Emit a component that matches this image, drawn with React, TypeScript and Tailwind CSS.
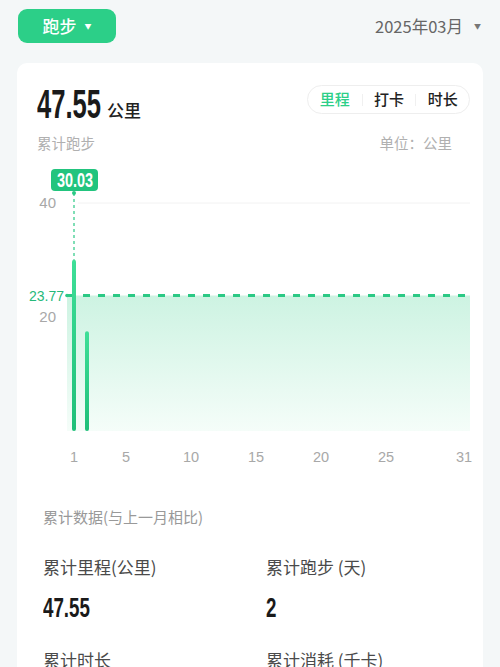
import React from 'react';

// --- Chart geometry (page coordinates shifted into the card) ---
const OX = 17; // card left
const OY = 165; // chart block top
const dayX = (d: number) => 74 + (d - 1) * 13 - OX;
const valY = (v: number) => 431 - v * 5.7 - OY;

const runs = [
  { day: 1, km: 30.03 },
  { day: 2, km: 17.52 },
];
const avg = 23.77;
const ticks = [1, 5, 10, 15, 20, 25, 31];

const num = "font-['Liberation_Sans',Arial,sans-serif] font-bold whitespace-nowrap";
const cjk = "font-['Noto_Sans_CJK_SC','Noto_Sans',sans-serif]";

function RunChart() {
  const avgY = valY(avg);
  const base = valY(0);
  return (
    <div className="relative mt-[11px] h-[305px]">
      <svg width="466" height="305" className="block">
        <defs>
          <linearGradient id="area" x1="0" y1="0" x2="0" y2="1">
            <stop offset="0%" stopColor="#cdf3e2" />
            <stop offset="100%" stopColor="#f5fdf9" />
          </linearGradient>
          <linearGradient id="bar" x1="0" y1="0" x2="0" y2="1">
            <stop offset="0%" stopColor="#3fdf98" />
            <stop offset="100%" stopColor="#1fbf79" />
          </linearGradient>
        </defs>

        {/* grid */}
        <line x1={78 - OX} x2={470 - OX} y1={valY(40)} y2={valY(40)} stroke="#f2f2f2" strokeWidth="1" />

        {/* average area */}
        <rect x={67 - OX} y={avgY} width={470 - 67} height={base - avgY} fill="url(#area)" />
        <line x1={68 - OX} x2={470 - OX} y1={avgY} y2={avgY} stroke="#2bc985" strokeWidth="3" strokeDasharray="7 8" />
        <circle cx={67 - OX} cy={avgY} r="1.8" fill="#2bc985" />

        {/* bars */}
        {runs.map((r) => (
          <rect
            key={r.day}
            x={dayX(r.day) - 2}
            y={valY(r.km)}
            width="4"
            height={base - valY(r.km)}
            rx="2"
            fill="url(#bar)"
          />
        ))}

        {/* pointer */}
        <line x1={dayX(1)} x2={dayX(1)} y1={193 - OY} y2={valY(30.03)} stroke="#2bc985" strokeWidth="1.2" strokeDasharray="3 3" />
        <circle cx={dayX(1)} cy={193 - OY} r="2" fill="#2bc985" />

        {/* y labels */}
        <text x={56 - OX} y={valY(40) + 5} textAnchor="end" fontSize="15" fill="#a8a8a8" fontFamily="Liberation Sans, sans-serif">40</text>
        <text x={56 - OX} y={valY(20) + 5} textAnchor="end" fontSize="15" fill="#a8a8a8" fontFamily="Liberation Sans, sans-serif">20</text>
        <text x={64 - OX} y={avgY + 5} textAnchor="end" fontSize="14" fill="#26b97a" fontFamily="Liberation Sans, sans-serif">{avg}</text>

        {/* x labels */}
        {ticks.map((t) => (
          <text key={t} x={dayX(t)} y={462 - OY} textAnchor="middle" fontSize="14.5" fill="#a8a8a8" fontFamily="Liberation Sans, sans-serif">
            {t}
          </text>
        ))}
      </svg>

      {/* tooltip badge */}
      <div className="absolute left-[34px] top-[4px] flex h-[22px] w-[47px] items-center justify-center rounded-[4px] bg-[#22c47e] text-white">
        <span className={`inline-block w-[36px] text-[19.5px] leading-[22px] ${num}`}>
          <span className="inline-block origin-left scale-x-[0.74]">30.03</span>
        </span>
      </div>
    </div>
  );
}

function Stat({ label, value, w }: { label: string; value: string; w: string }) {
  return (
    <div>
      <div className={`text-[17px] text-[#4a4a4a] leading-[24px] ${cjk}`}>{label}</div>
      <div className={`mt-[14px] text-[28px] leading-[30px] text-[#1a1a1a] ${num} ${w}`}>
        <span className="inline-block origin-left scale-x-[0.67]">{value}</span>
      </div>
    </div>
  );
}

export default function App() {
  const tabs = ['里程', '打卡', '时长'];
  return (
    <div className={`min-h-screen bg-[#f4f7f8] pb-4 ${cjk}`}>
      {/* Header */}
      <div className="flex items-center justify-between pl-[18px] pr-[19px] pt-[9px]">
        <button className="flex h-[34px] w-[98px] items-center justify-center gap-[8px] rounded-[9px] bg-[#2ccf88] text-[17px] font-medium text-white">
          <span>跑步</span>
          <span className="text-[7px] leading-none">▼</span>
        </button>
        <div className="flex items-center gap-[11px] text-[16.5px] text-[#666]">
          <span>2025年03月</span>
          <span className="text-[7px] leading-none text-[#777]">▼</span>
        </div>
      </div>

      {/* Card */}
      <div className="mx-[17px] mt-[20px] rounded-[10px] bg-white pb-10">
        <div className="flex items-start justify-between pl-[20px] pr-[13px] pt-[25px]">
          <div className="flex items-end gap-[6px]">
            <span className={`w-[64px] text-[40px] leading-[32px] text-[#1a1a1a] ${num}`}>
              <span className="inline-block origin-left scale-x-[0.64]">47.55</span>
            </span>
            <span className="text-[17px] leading-[20px] font-medium text-[#222]">公里</span>
          </div>
          <div className="-mt-[3px] flex h-[29px] w-[163px] items-center rounded-full border border-[#eeeeee] text-[15px] font-medium">
            {tabs.map((t, i) => (
              <div key={t} className="flex flex-1 items-center justify-center">
                {i > 0 && <span className="mr-auto h-[12px] w-px bg-[#f0f0f0]" />}
                <span className={`${i > 0 ? 'mr-auto' : ''} ${i === 0 ? 'text-[#2ccf88]' : 'text-[#222]'}`}>{t}</span>
              </div>
            ))}
          </div>
        </div>
        <div className="flex justify-between pl-[20px] pr-[31px] pt-[12px] text-[14.5px] text-[#b0b0b0]">
          <span>累计跑步</span>
          <span>单位：公里</span>
        </div>

        <RunChart />

        <div className="px-[26px] pt-[36px]">
          <div className="text-[15px] text-[#999]">累计数据(与上一月相比)</div>
          <div className="mt-[27px] grid grid-cols-[223px_1fr] gap-y-[25px]">
            <Stat label="累计里程(公里)" value="47.55" w="w-[47px]" />
            <Stat label="累计跑步 (天)" value="2" w="w-[12px]" />
            <Stat label="累计时长" value="2:58:34" w="w-[70px]" />
            <Stat label="累计消耗 (千卡)" value="3108" w="w-[50px]" />
          </div>
        </div>
      </div>
    </div>
  );
}
